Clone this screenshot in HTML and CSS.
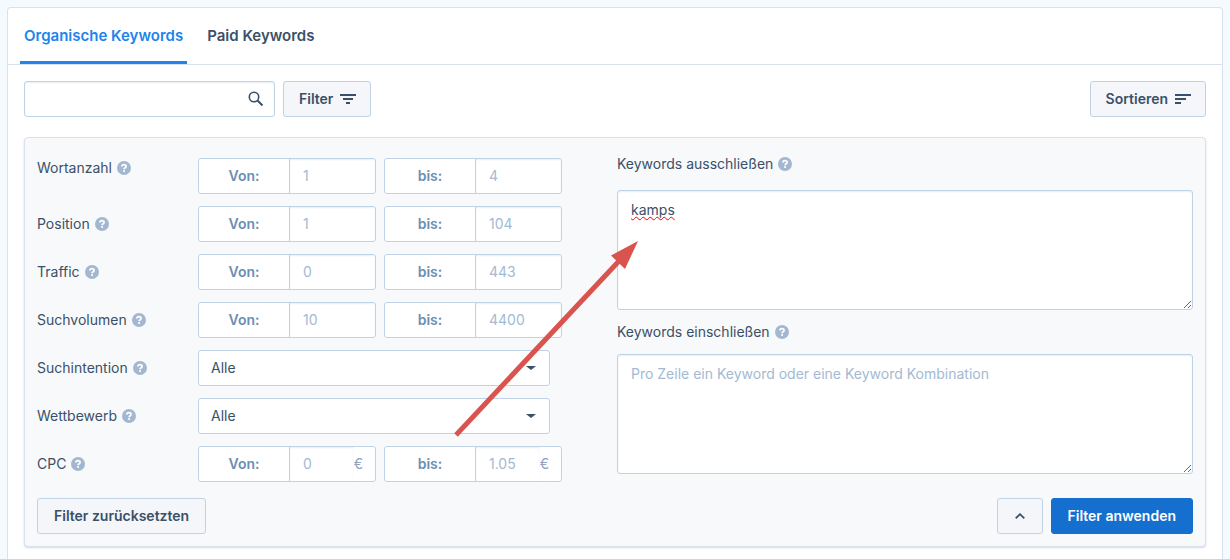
FILE: index.html
```
<!doctype html>
<html lang="de">
<head>
    <meta charset="UTF-8">
    <title>Organische Keywords</title>
    <link rel="stylesheet" href="styles.css">
</head>
<body>
<svg class="sprite" aria-hidden="true">
    <symbol id="help" viewBox="0 0 14 14">
        <circle cx="7" cy="7" r="7" fill="#a3b8d0"/>
        <path d="M4.900 5.600C4.900 4.200 5.800 3.600 7 3.600s2.100.7 2.100 1.800c0 1.300-2 1.400-2 2.800" fill="none" stroke="#fff" stroke-width="1.700"/>
        <rect x="6.200" y="9.100" width="1.800" height="1.800" fill="#fff"/>
    </symbol>
</svg>
<main class="card">
    <nav class="tabs">
        <a href="#organic" class="tab active">Organische Keywords</a>
        <a href="#paid" class="tab">Paid Keywords</a>
    </nav>
    <div class="toolbar">
        <div class="search">
            <input type="text" class="search-input" aria-label="Keyword suchen">
            <button type="button" class="search-btn" aria-label="Suchen">
                <svg width="16" height="16" viewBox="0 0 16 16" fill="none" stroke="#3a5068">
                    <circle cx="6" cy="6" r="4.700" stroke-width="1.600"/>
                    <path d="M9.500 9.500l5 5" stroke-width="2"/>
                </svg>
            </button>
        </div>
        <button type="button" class="btn btn-icon">Filter
            <svg width="16" height="10" viewBox="0 0 16 10" fill="#3a5068">
                <path d="M0 0h16v2H0zM3 4h10v2H3zM6 8h4v2H6z"/>
            </svg>
        </button>
        <button type="button" class="btn btn-icon btn-sort">Sortieren
            <svg width="16" height="10" viewBox="0 0 16 10" fill="#3a5068">
                <path d="M0 0h16v2H0zM0 4h11v2H0zM0 8h6v2H0z"/>
            </svg>
        </button>
    </div>

    <form class="panel">
        <div class="columns">
            <div class="fields">
                <div class="row row-first">
                    <label class="label" for="words-from">Wortanzahl <svg class="help"><use href="#help"/></svg></label>
                    <div class="group"><label class="addon" for="words-from">Von:</label><input type="text" id="words-from" class="value" placeholder="1"></div>
                    <div class="group"><label class="addon" for="words-to">bis:</label><input type="text" id="words-to" class="value" placeholder="4"></div>
                </div>
                <div class="row">
                    <label class="label" for="pos-from">Position <svg class="help"><use href="#help"/></svg></label>
                    <div class="group"><label class="addon" for="pos-from">Von:</label><input type="text" id="pos-from" class="value" placeholder="1"></div>
                    <div class="group"><label class="addon" for="pos-to">bis:</label><input type="text" id="pos-to" class="value" placeholder="104"></div>
                </div>
                <div class="row">
                    <label class="label" for="traffic-from">Traffic <svg class="help"><use href="#help"/></svg></label>
                    <div class="group"><label class="addon" for="traffic-from">Von:</label><input type="text" id="traffic-from" class="value" placeholder="0"></div>
                    <div class="group"><label class="addon" for="traffic-to">bis:</label><input type="text" id="traffic-to" class="value" placeholder="443"></div>
                </div>
                <div class="row">
                    <label class="label" for="volume-from">Suchvolumen <svg class="help"><use href="#help"/></svg></label>
                    <div class="group"><label class="addon" for="volume-from">Von:</label><input type="text" id="volume-from" class="value" placeholder="10"></div>
                    <div class="group"><label class="addon" for="volume-to">bis:</label><input type="text" id="volume-to" class="value" placeholder="4400"></div>
                </div>
                <div class="row">
                    <label class="label" for="intent">Suchintention <svg class="help"><use href="#help"/></svg></label>
                    <div class="select-wrap">
                        <select id="intent" class="select"><option>Alle</option></select>
                    </div>
                </div>
                <div class="row">
                    <label class="label" for="competition">Wettbewerb <svg class="help"><use href="#help"/></svg></label>
                    <div class="select-wrap">
                        <select id="competition" class="select"><option>Alle</option></select>
                    </div>
                </div>
                <div class="row">
                    <label class="label" for="cpc-from">CPC <svg class="help"><use href="#help"/></svg></label>
                    <div class="group"><label class="addon" for="cpc-from">Von:</label><input type="text" id="cpc-from" class="value" placeholder="0"><span class="unit">€</span></div>
                    <div class="group"><label class="addon" for="cpc-to">bis:</label><input type="text" id="cpc-to" class="value" placeholder="1.05"><span class="unit">€</span></div>
                </div>
            </div>
            <div class="lists">
                <label class="label" for="exclude">Keywords ausschließen <svg class="help"><use href="#help"/></svg></label>
                <textarea id="exclude" class="area misspelled" spellcheck="false">kamps</textarea>
                <label class="label" for="include">Keywords einschließen <svg class="help"><use href="#help"/></svg></label>
                <textarea id="include" class="area" placeholder="Pro Zeile ein Keyword oder eine Keyword Kombination"></textarea>
            </div>
        </div>
        <div class="actions">
            <button type="reset" class="btn">Filter zurücksetzten</button>
            <button type="button" class="btn btn-collapse" aria-label="Einklappen">
                <svg width="10" height="6" viewBox="0 0 10 6" fill="none" stroke="#3a5068" stroke-width="1.800">
                    <path d="M.7 5.300L5 1.200l4.300 4.100"/>
                </svg>
            </button>
            <button type="submit" class="btn btn-primary">Filter anwenden</button>
        </div>
        <!-- arrow pointing at the exclude list -->
        <svg class="arrow" width="190" height="200" viewBox="0 0 190 200" aria-hidden="true">
            <path d="M5 197L168 23" stroke="#d9534f" stroke-width="5"/>
            <path d="M187 3l-27 14.500 14 13.500z" fill="#d9534f"/>
        </svg>
    </form>
</main>
</body>
</html>
```
FILE: styles.css
```
*{
    box-sizing: border-box;
}
body{
    margin: 0;
    padding: 7px 7px 0;
    min-height: 100vh;
    display: flex;
    background: #f5faff;
    color: #3a5068;
    font: 14px/20px Inter, "Liberation Sans", sans-serif;
}
input, select, textarea, button{
    font: inherit;
    color: inherit;
    margin: 0;
}
.sprite{
    display: none;
}
.card{
    flex: 1;
    background: #fff;
    border: 1px solid #d6e2ee;
    border-bottom: 0;
    border-radius: 4px 4px 0 0;
}
.tabs{
    display: flex;
    gap: 16px;
    padding: 0 12px;
    border-bottom: 1px solid #d6e2ee;
}
.tab{
    padding: 18px 4px 15px;
    border-bottom: 3px solid transparent;
    font-size: 15px;
    font-weight: 600;
    color: #3a5068;
    text-decoration: none;
}
.tab.active{
    color: #2184ec;
    border-color: #2184ec;
}
.toolbar{
    display: flex;
    gap: 8px;
    padding: 16px 16px 20px;
}
.search{
    display: flex;
    width: 251px;
    height: 36px;
    border: 1px solid #c0d2e6;
    border-radius: 3px;
    box-shadow: inset 0 1px 2px #e8eef4;
}
.search-input{
    flex: 1;
    min-width: 0;
    padding: 0 12px;
    border: 0;
    background: none;
}
.search-btn{
    display: flex;
    align-items: center;
    padding: 0 10px;
    border: 0;
    background: none;
}
.btn{
    display: flex;
    align-items: center;
    justify-content: center;
    height: 36px;
    padding: 0 16px;
    border: 1px solid #c0d2e6;
    border-radius: 3px;
    background: #f4f6fa;
    font-weight: 600;
    cursor: pointer;
}
.btn-icon{
    gap: 7px;
    padding: 0 14px 0 15px;
}
.btn-sort{
    margin-left: auto;
}
.panel{
    position: relative;
    margin: 0 16px;
    padding: 16px 12px 12px;
    border: 1px solid #d6e2ee;
    border-radius: 4px;
    background: #f8f9fb;
    box-shadow: 0 1px 2px #d5dae0;
}
.columns{
    display: grid;
    grid-template-columns: 1fr 1fr;
    gap: 4px;
}
.fields{
    display: flex;
    flex-direction: column;
    gap: 12px;
    padding-top: 4px;
}
.row{
    display: flex;
    align-items: center;
    gap: 8px;
}
.row-first{
    align-items: flex-start;
}
.row .label{
    width: 153px;
}
.label{
    display: flex;
    align-items: center;
    gap: 5px;
}
.help{
    width: 14px;
    height: 14px;
}
.group{
    display: flex;
    align-items: center;
    width: 178px;
    height: 36px;
    border: 1px solid #c0d2e6;
    border-radius: 3px;
    background: #fff;
    overflow: hidden;
}
.addon{
    width: 91px;
    line-height: 34px;
    border-right: 1px solid #c0d2e6;
    text-align: center;
    font-weight: 600;
    color: #6c8eb3;
}
.value{
    flex: 1;
    min-width: 0;
    height: 34px;
    padding: 0 13px 2px;
    border: 0;
    background: none;
    box-shadow: inset 0 1px 2px #e8eef4;
}
.value::placeholder, .area::placeholder{
    color: #a3bad2;
    opacity: 1;
}
.unit{
    padding-right: 12px;
    color: #8ba5c1;
}
.select-wrap{
    display: grid;
    align-items: center;
    width: 352px;
}
.select{
    grid-area: 1 / 1;
    width: 100%;
    height: 36px;
    padding: 0 12px;
    border: 1px solid #c0d2e6;
    border-radius: 3px;
    background: #fff;
    appearance: none;
}
.select-wrap::after{
    content: "";
    grid-area: 1 / 1;
    justify-self: end;
    margin-right: 14px;
    border: 5px solid transparent;
    border-top: 4px solid #3a5068;
    border-bottom: 0;
    pointer-events: none;
}
.lists{
    display: flex;
    flex-direction: column;
}
.area{
    height: 120px;
    margin: 16px 0 12px;
    padding: 9px 13px;
    border: 1px solid #c0d2e6;
    border-radius: 3px;
    background: #fff;
    box-shadow: inset 0 1px 2px #e8eef4;
}
.label + .area:last-child{
    margin: 12px 0 0;
}
.misspelled{
    text-decoration: underline wavy #f00 1px;
    text-decoration-skip-ink: none;
}
.actions{
    display: flex;
    gap: 8px;
    margin-top: 16px;
}
.btn-collapse{
    width: 46px;
    margin-left: auto;
}
.btn-primary{
    border-color: #156fcf;
    background: #156fcf;
    color: #fff;
}
.arrow{
    position: absolute;
    left: 426px;
    top: 100px;
    pointer-events: none;
}
```
